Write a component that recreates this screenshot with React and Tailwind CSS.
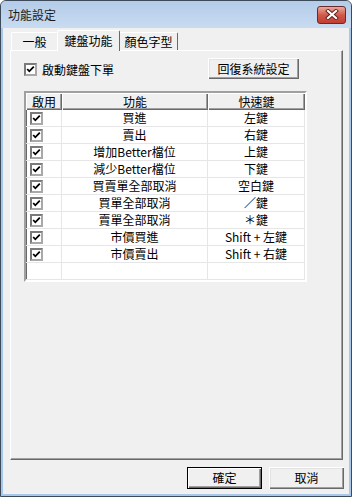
import React from 'react';

const rows = [
  ["買進", "左鍵"],
  ["賣出", "右鍵"],
  ["增加Better檔位", "上鍵"],
  ["減少Better檔位", "下鍵"],
  ["買賣單全部取消", "空白鍵"],
  ["買單全部取消", "／鍵"],
  ["賣單全部取消", "＊鍵"],
  ["市價買進", "Shift + 左鍵"],
  ["市價賣出", "Shift + 右鍵"],
];

function Check() {
  return (
    <svg width="9" height="9" viewBox="0 0 9 9">
      <polyline points="1.2,4 3.3,6.3 7.8,1.6" fill="none" stroke="#000" strokeWidth="1.8" />
    </svg>
  );
}

function CheckBox() {
  return (
    <div className="w-[13px] h-[13px] bg-white flex items-center justify-center border-2 border-t-[#7a7a7a] border-l-[#7a7a7a] border-r-[#a8a8a8] border-b-[#a8a8a8]">
      <Check />
    </div>
  );
}

function WinButton({ children, isDefault, className = "" }) {
  return (
    <button
      className={
        "bg-[#f0f0f0] flex items-center justify-center " +
        (isDefault
          ? "border border-black shadow-[inset_1px_1px_#fff,inset_-1px_-1px_#696969,inset_-2px_-2px_#a0a0a0] "
          : "shadow-[inset_1px_1px_#fff,inset_-1px_-1px_#696969,inset_-2px_-2px_#a0a0a0,inset_2px_2px_#e3e3e3] ") +
        className
      }
    >
      {children}
    </button>
  );
}

export default function App() {
  return (
    <div className="w-[352px] h-[497px] flex flex-col border border-[#3d4a5a] rounded-t-[6px] overflow-hidden bg-[#a9c7ea] font-['Noto_Sans_CJK_TC',sans-serif] text-[12px] leading-none text-black">
      {/* title bar */}
      <div className="h-[27px] flex items-center justify-between pl-[7px] pr-[5px] bg-gradient-to-b from-[#b4cce9] to-[#c8dbf1]">
        <span className="text-[#1a1a1a]">功能設定</span>
        <div className="w-[29px] h-[18px] rounded-[3px] border border-[#6a2a2a] bg-gradient-to-b from-[#e9a99a] via-[#d0594b] to-[#c23e30] flex items-center justify-center">
          <svg width="14" height="11" viewBox="0 0 14 11">
            <path d="M3 2 L11 9 M11 2 L3 9" stroke="#5a1f1f" strokeWidth="4" strokeLinecap="square" />
            <path d="M3 2 L11 9 M11 2 L3 9" stroke="#fff" strokeWidth="2.2" strokeLinecap="square" />
          </svg>
        </div>
      </div>

      {/* client area */}
      <div className="flex-1 mx-[2px] mb-[2px] bg-[#f0f0f0] flex flex-col pl-[7px] pr-[6px]">
        {/* tabs */}
        <div className="h-[22px] flex items-end pl-[1px]">
          <div className="w-[47px] h-[18px] bg-[#f0f0f0] border-t border-l border-r border-t-white border-l-white border-r-[#a0a0a0] rounded-t-[2px] flex items-center justify-center">
            一般
          </div>
          <div className="relative z-10 w-[63px] h-[21px] -ml-[1px] -mr-[1px] -mb-[1px] bg-[#f0f0f0] border-t border-l border-r border-t-white border-l-white border-r-[#696969] rounded-t-[2px] flex items-start justify-center pt-[4px]">
            鍵盤功能
          </div>
          <div className="w-[59px] h-[18px] bg-[#f0f0f0] border-t border-l border-r border-t-white border-l-white border-r-[#696969] rounded-t-[2px] flex items-center justify-center">
            顏色字型
          </div>
        </div>

        {/* tab panel */}
        <div className="h-[410px] flex flex-col border border-t-white border-l-white border-r-[#696969] border-b-[#696969] shadow-[inset_-1px_-1px_#a0a0a0]">
          <div className="flex items-start mt-[7px]">
            <div className="flex items-center gap-[5px] ml-[13px] mt-[5px]">
              <CheckBox />
              <span>啟動鍵盤下單</span>
            </div>
            <WinButton className="ml-auto mr-[43px] w-[91px] h-[21px]">回復系統設定</WinButton>
          </div>

          {/* grid */}
          <div className="ml-[13px] mt-[12px] w-[283px] h-[191px] overflow-hidden bg-white border-2 border-t-[#a0a0a0] border-l-[#a0a0a0] border-r-white border-b-white shadow-[inset_1px_1px_#696969]">
            <div className="grid grid-cols-[36px_146px_97px] pl-[0px]">
              {["啟用", "功能", "快速鍵"].map((h) => (
                <div
                  key={h}
                  className="h-[17px] bg-[#f0f0f0] flex items-center justify-center shadow-[inset_1px_1px_#fff,inset_-1px_-1px_#696969,inset_-2px_-2px_#a0a0a0]"
                >
                  {h}
                </div>
              ))}
              {rows.map(([name, key]) => (
                <React.Fragment key={name}>
                  <div className="h-[17px] border-r border-b border-[#e6e6e6] flex items-center pl-[4px]">
                    <CheckBox />
                  </div>
                  <div className="h-[17px] border-r border-b border-[#e6e6e6] flex items-center justify-center">
                    {name}
                  </div>
                  <div className="h-[17px] border-r border-b border-[#e6e6e6] flex items-center justify-center">
                    {key}
                  </div>
                </React.Fragment>
              ))}
              <div className="h-[17px] border-r border-b border-[#e6e6e6]" />
              <div className="h-[17px] border-r border-b border-[#e6e6e6]" />
              <div className="h-[17px] border-r border-b border-[#e6e6e6]" />
            </div>
          </div>
        </div>

        {/* dialog buttons */}
        <div className="mt-[7px] -mr-[1px] flex justify-end gap-[7px]">
          <WinButton isDefault className="w-[75px] h-[22px]">確定</WinButton>
          <WinButton className="w-[75px] h-[22px]">取消</WinButton>
        </div>
      </div>
    </div>
  );
}
